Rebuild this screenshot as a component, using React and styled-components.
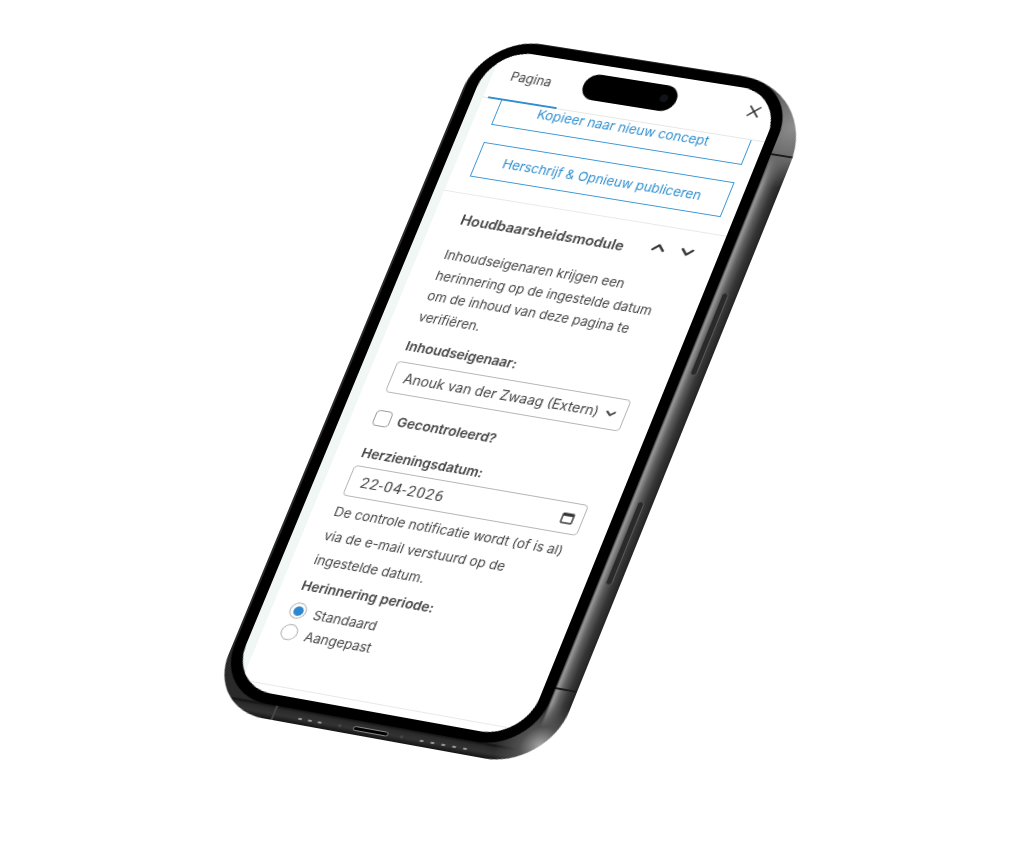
import React from "react";
import styled, { createGlobalStyle } from "styled-components";
import { X, ChevronUp, ChevronDown } from "lucide-react";

// where the corners of the screen land in the picture
const SCREEN = { x: 13, y: 12, w: 300, h: 695 };
const QUAD = [
  [493, 48],
  [784, 94],
  [523, 739],
  [229, 686],
];

const planeTransform = (s, q) => {
  const [[x0, y0], [x1, y1], [x2, y2], [x3, y3]] = q;
  const dx1 = x1 - x2;
  const dx2 = x3 - x2;
  const dy1 = y1 - y2;
  const dy2 = y3 - y2;
  const sx = x0 - x1 + x2 - x3;
  const sy = y0 - y1 + y2 - y3;
  const det = dx1 * dy2 - dx2 * dy1;
  const g = (sx * dy2 - dx2 * sy) / det;
  const h = (dx1 * sy - sx * dy1) / det;
  const A = (x1 - x0 + g * x1) / s.w;
  const B = (x3 - x0 + h * x3) / s.h;
  const D = (y1 - y0 + g * y1) / s.w;
  const E = (y3 - y0 + h * y3) / s.h;
  const G = g / s.w;
  const H = h / s.h;
  const C = x0 - A * s.x - B * s.y;
  const F = y0 - D * s.x - E * s.y;
  const I = 1 - G * s.x - H * s.y;
  return `matrix3d(${A},${D},0,${G},${B},${E},0,${H},0,0,1,0,${C},${F},0,${I})`;
};

const Global = createGlobalStyle`
  html, body {
    margin: 0;
    background: #fff;
  }
  * {
    box-sizing: border-box;
  }
`;

const Page = styled.div`
  width: 1024px;
  height: 844px;
  overflow: hidden;
  background: #fff;
  font-family: Inter, "Liberation Sans", sans-serif;
  color: #444;
`;

const Shell = styled.div`
  position: relative;
  width: 346px;
  height: 733px;
  padding: 1px 22px 15px 2px;
  overflow: hidden;
  border-radius: 60px 82px 62px 58px;
  transform-origin: 0 0;
  transform: ${planeTransform(SCREEN, QUAD)};
  filter: blur(0.45px);
  background:
    radial-gradient(circle at 96% 97%, #a8a8a8 0, #505050 20px, transparent 44px),
    radial-gradient(circle at 97% 6%, #8d8d8d 0, #6a6a6a 34px, transparent 66px),
    linear-gradient(0deg, #141414 0, #333 6px, #2a2a2a 12px, #111 15px, transparent 16px),
    linear-gradient(
      90deg,
      #2a2a2a 0,
      #2a2a2a calc(100% - 22px),
      #9a9a9a calc(100% - 20px),
      #5e5e5e calc(100% - 14px),
      #363636 calc(100% - 7px),
      #242424 100%
    );
`;

const Bezel = styled.div`
  width: 322px;
  height: 717px;
  padding: 11px;
  border-radius: 54px;
  background: #000;
`;

const Screen = styled.div`
  position: relative;
  display: flex;
  width: 300px;
  height: 695px;
  overflow: hidden;
  border-radius: 44px;
  background: #f0f7f4;
`;

const Island = styled.div`
  position: absolute;
  top: 10px;
  left: 103px;
  z-index: 2;
  display: flex;
  align-items: center;
  justify-content: flex-end;
  width: 96px;
  height: 28px;
  padding-right: 9px;
  border-radius: 14px;
  background: #000;
  &::after {
    content: "";
    width: 8px;
    height: 8px;
    border-radius: 50%;
    background: #10141a;
  }
`;

const Panel = styled.div`
  display: flex;
  flex-direction: column;
  width: 290px;
  margin-left: 10px;
  background: #fff;
`;

const TabBar = styled.div`
  position: relative;
  z-index: 1;
  display: flex;
  align-items: center;
  justify-content: space-between;
  flex: none;
  height: 53px;
  padding-right: 12px;
  border-bottom: 1px solid #e6e6e6;
  background: #fff;
`;

const Tab = styled.div`
  width: 71px;
  height: 53px;
  margin-left: 5px;
  padding: 18px 0 0 14px;
  border-bottom: 2px solid #2f8fd0;
  font-size: 13px;
  color: #444;
`;

const CloseIcon = styled(X)`
  width: 20px;
  height: 20px;
  margin-top: -6px;
  color: #333;
`;

const Scroller = styled.div`
  flex: 1;
  overflow: hidden;
`;

const ActionGroup = styled.div`
  display: flex;
  flex-direction: column;
  gap: 19px;
  margin-top: -11px;
  padding: 0 13px 18px 19px;
  border-bottom: 1px solid #e8e8e8;
`;

const ActionButton = styled.div`
  display: flex;
  align-items: center;
  justify-content: center;
  height: 38px;
  border: 1.5px solid #3c98d6;
  font-size: 13.3px;
  color: #2f8fd0;
`;

const Module = styled.div`
  padding: 17px 13px 0 25px;
`;

const ModuleHead = styled.div`
  display: flex;
  align-items: center;
  justify-content: space-between;
  height: 18px;
  padding-left: 3px;
`;

const ModuleTitle = styled.div`
  font-size: 14.5px;
  font-weight: 600;
  color: #444;
`;

const Arrows = styled.div`
  display: flex;
  gap: 8px;
  margin: -8px 8px 0 0;
  color: #333;
  svg {
    width: 21px;
    height: 21px;
    stroke-width: 2.5;
  }
`;

const Intro = styled.p`
  margin: 19px 0 0 1px;
  font-size: 13.2px;
  line-height: 22.5px;
`;

const FieldLabel = styled.div`
  margin: ${(p) => p.$top}px 0 0 ${(p) => p.$left || 0}px;
  font-size: 13.5px;
  line-height: 16px;
  font-weight: 600;
  color: #444;
`;

const Input = styled.div`
  display: flex;
  align-items: center;
  justify-content: space-between;
  width: 240px;
  height: ${(p) => p.$height}px;
  margin: ${(p) => p.$top}px 0 0 -2px;
  padding: 0 7px 0 12px;
  border: 1.5px solid #b5b5b5;
  border-radius: 4px;
  font-size: 13.9px;
  color: #444;
`;

const DateValue = styled.span`
  letter-spacing: 1px;
  font-family: Roboto, sans-serif;
  font-size: 15px;
`;

const CheckRow = styled.label`
  display: flex;
  align-items: center;
  gap: 7px;
  margin: 19px 0 0 -2px;
  font-size: 13.6px;
  font-weight: 600;
`;

const Box = styled.span`
  width: 17px;
  height: 17px;
  border: 1.5px solid #999;
  border-radius: 4px;
`;

const Hint = styled.p`
  margin: 4px 0 0 -3px;
  font-size: 13.35px;
  line-height: 26px;
`;

const RadioRow = styled.label`
  display: flex;
  gap: 8px;
  margin: ${(p) => p.$top}px 0 0 -7px;
  font-size: 13.4px;
  line-height: 16px;
`;

const Radio = styled.span`
  flex: none;
  display: flex;
  align-items: center;
  justify-content: center;
  width: 17px;
  height: 17px;
  margin-top: -2px;
  border: 1.5px solid #a8a8a8;
  border-radius: 50%;
  &::after {
    content: "";
    width: 10px;
    height: 10px;
    border-radius: 50%;
    background: ${(p) => (p.$on ? "#2d87cc" : "transparent")};
  }
`;

const BottomRule = styled.div`
  height: 1px;
  margin-top: 46px;
  background: #e8e8e8;
`;

const SideKey = styled.div`
  position: absolute;
  right: 8px;
  top: ${(p) => p.$top}px;
  width: 7px;
  height: ${(p) => p.$len}px;
  border: 1px solid #5a5a5a;
  border-radius: 4px;
  background: #2a2a2a;
`;

const Antenna = styled.div`
  position: absolute;
  right: 0;
  top: ${(p) => p.$top}px;
  width: 22px;
  height: 2px;
  background: #1c1c1c;
`;

const BottomAntenna = styled.div`
  position: absolute;
  bottom: 0;
  left: 66px;
  width: 2px;
  height: 15px;
  background: #444;
`;

const SpeakerRow = styled.div`
  position: absolute;
  bottom: 5px;
  left: ${(p) => p.$left}px;
  display: flex;
  gap: ${(p) => p.$gap}px;
  span {
    width: 4px;
    height: 2px;
    border-radius: 1px;
    background: #9a9a9a;
  }
`;

const Port = styled.div`
  position: absolute;
  bottom: 4px;
  left: 148px;
  width: 36px;
  height: 5px;
  border: 1px solid #8a8a8a;
  border-radius: 3px;
  background: #000;
  &::before,
  &::after {
    content: "";
    position: absolute;
    top: 0;
    width: 3px;
    height: 3px;
    border-radius: 50%;
    background: #4a4a4a;
  }
  &::before {
    left: -16px;
  }
  &::after {
    right: -16px;
  }
`;

const CalendarIcon = () => (
  <svg width="15" height="15" viewBox="0 0 16 16" fill="none">
    <path d="M3 3.5h10a.8.8 0 0 1 .8.8V13a.8.8 0 0 1-.8.8H3a.8.8 0 0 1-.8-.8V4.3a.8.8 0 0 1 .8-.8z" stroke="#333" strokeWidth="1.5" />
    <path d="M2.5 5h11" stroke="#333" strokeWidth="2.4" />
  </svg>
);

const SelectArrow = () => (
  <svg width="14" height="14" viewBox="0 0 14 14" fill="none">
    <path d="M2.5 5l4.5 4 4.5-4" stroke="#444" strokeWidth="1.8" />
  </svg>
);

const Speakers = ({ left, count, gap }) => (
  <SpeakerRow $left={left} $gap={gap}>
    {Array.from({ length: count }, (_, i) => (
      <span key={i} />
    ))}
  </SpeakerRow>
);

export default function App() {
  return (
    <Page>
      <Global />
      <Shell>
        <Antenna $top={75} />
        <Antenna $top={650} />
        <BottomAntenna />
        <SideKey $top={225} $len={90} />
        <SideKey $top={450} $len={90} />
        <Speakers left={92} count={3} gap={6} />
        <Port />
        <Speakers left={216} count={5} gap={7} />
        <Bezel>
          <Screen>
            <Island />
            <Panel>
              <TabBar>
                <Tab>Pagina</Tab>
                <CloseIcon />
              </TabBar>
              <Scroller>
                <ActionGroup>
                  <ActionButton>Kopieer naar nieuw concept</ActionButton>
                  <ActionButton>Herschrijf &amp; Opnieuw publiceren</ActionButton>
                </ActionGroup>
                <Module>
                  <ModuleHead>
                    <ModuleTitle>Houdbaarsheidsmodule</ModuleTitle>
                    <Arrows>
                      <ChevronUp />
                      <ChevronDown />
                    </Arrows>
                  </ModuleHead>
                  <Intro>
                    Inhoudseigenaren krijgen een
                    <br />
                    herinnering op de ingestelde datum
                    <br />
                    om de inhoud van deze pagina te
                    <br />
                    verifiëren.
                  </Intro>
                  <FieldLabel $top={13}>Inhoudseigenaar:</FieldLabel>
                  <Input $top={9} $height={34}>
                    Anouk van der Zwaag (Extern)
                    <SelectArrow />
                  </Input>
                  <CheckRow>
                    <Box />
                    Gecontroleerd?
                  </CheckRow>
                  <FieldLabel $top={21}>Herzieningsdatum:</FieldLabel>
                  <Input $top={6} $height={33}>
                    <DateValue>22-04-2026</DateValue>
                    <CalendarIcon />
                  </Input>
                  <Hint>
                    De controle notificatie wordt (of is al)
                    <br />
                    via de e-mail verstuurd op de
                    <br />
                    ingestelde datum.
                  </Hint>
                  <FieldLabel $top={7} $left={-5}>
                    Herinnering periode:
                  </FieldLabel>
                  <RadioRow $top={12}>
                    <Radio $on />
                    Standaard
                  </RadioRow>
                  <RadioRow $top={7}>
                    <Radio />
                    Aangepast
                  </RadioRow>
                </Module>
                <BottomRule />
              </Scroller>
            </Panel>
          </Screen>
        </Bezel>
      </Shell>
    </Page>
  );
}
